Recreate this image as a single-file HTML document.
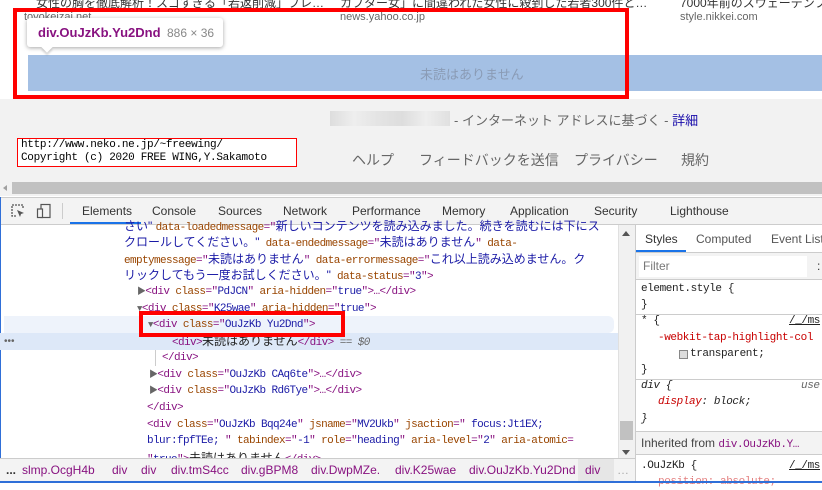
<!DOCTYPE html>
<html><head><meta charset="utf-8"><style>
*{margin:0;padding:0;box-sizing:border-box}
body{width:822px;height:483px;overflow:hidden;position:relative;background:#fff;font-family:"Liberation Sans","Noto Sans CJK JP",sans-serif;}
.a{position:absolute;white-space:nowrap}
.m{font-family:"Liberation Mono","Noto Sans CJK JP",monospace;font-size:11px;letter-spacing:-0.6px;color:#881280;line-height:16px}
.t{color:#881280}.n{color:#994500}.v{color:#1a1aa6}.k{color:#222}
.ja{font-family:"Liberation Sans","Noto Sans CJK JP",sans-serif;letter-spacing:0;font-size:12px}
.s{font-family:"Liberation Mono",monospace;font-size:11px;letter-spacing:-0.4px;color:#222;line-height:16px}
</style></head><body>
<div class="a" style="left:36px;top:-6px;font-size:12px;color:#333">女性の胸を徹底解析！スゴすぎる「若返削減」ブレ…</div>
<div class="a" style="left:340px;top:-6px;font-size:12px;color:#333">カブター女」に間違われた女性に殺到した若者300件と…</div>
<div class="a" style="left:680px;top:-6px;font-size:12px;color:#333">7000年前のスウェーデンブ</div>
<div class="a" style="left:24px;top:11px;font-size:11px;color:#666">toyokeizai.net</div>
<div class="a" style="left:340px;top:11px;font-size:11px;color:#666">news.yahoo.co.jp</div>
<div class="a" style="left:680px;top:11px;font-size:11px;color:#666">style.nikkei.com</div>
<div class="a" style="left:28px;top:55px;width:794px;height:36px;background:#a4c0e4"></div>
<div class="a" style="left:420px;top:64px;font-size:13px;color:#8a9bb5">未読はありません</div>
<div class="a" style="left:13px;top:8px;width:616px;height:91px;border:4px solid #f00"></div>
<div class="a" style="left:27px;top:18px;width:196px;height:29px;background:#fff;border-radius:3px;box-shadow:0 1px 4px rgba(0,0,0,.35)"></div>
<div class="a" style="left:43px;top:43px;width:8px;height:8px;background:#fff;transform:rotate(45deg);box-shadow:2px 2px 2px rgba(0,0,0,.15)"></div>
<div class="a" style="left:38px;top:25px;font-size:13px;font-weight:bold;color:#881280">div.OuJzKb.Yu2Dnd</div>
<div class="a" style="left:167px;top:26px;font-size:12px;color:#888">886 × 36</div>
<div class="a" style="left:0;top:99px;width:822px;height:97px;background:#f2f2f2"></div>
<div class="a" style="left:330px;top:111px;width:120px;height:15px;background:linear-gradient(90deg,#ddd,#eee 20%,#e4e4e4 40%,#ddd 60%,#eee 80%,#e0e0e0)"></div>
<div class="a" style="left:454px;top:110px;font-size:13px;color:#666">- インターネット アドレスに基づく - <span style="color:#1a0dab">詳細</span></div>
<div class="a" style="left:17px;top:138px;width:280px;height:29px;background:#fff;border:1px solid #f00"></div>
<div class="a" style="left:21px;top:139px;font-family:'Liberation Mono',monospace;font-size:11px;line-height:13px;color:#000;letter-spacing:-0.3px">http://www.neko.ne.jp/~freewing/<br>Copyright (c) 2020 FREE WING,Y.Sakamoto</div>
<div class="a" style="left:352px;top:150px;font-size:14px;color:#666">ヘルプ</div>
<div class="a" style="left:419px;top:150px;font-size:14px;color:#666">フィードバックを送信</div>
<div class="a" style="left:574px;top:150px;font-size:14px;color:#666">プライバシー</div>
<div class="a" style="left:681px;top:150px;font-size:14px;color:#666">規約</div>
<div class="a" style="left:12px;top:182px;width:810px;height:12px;background:#c1c1c1"></div>
<div class="a" style="left:3px;top:185px;width:0;height:0;border-top:3px solid transparent;border-bottom:3px solid transparent;border-right:4px solid #a0a0a0"></div>
<div class="a" style="left:0;top:197px;width:822px;height:28px;background:#f3f3f3;border-top:1px solid #ccc;border-bottom:1px solid #ccc"></div>
<svg class="a" style="left:10px;top:203px" width="16" height="16" viewBox="0 0 16 16"><path d="M6 13H2V2h11v4" fill="none" stroke="#555" stroke-width="1.3" stroke-dasharray="2 1"/><path d="M7 7l7 3-3 1-1 3z" fill="#555"/></svg>
<svg class="a" style="left:36px;top:203px" width="16" height="16" viewBox="0 0 16 16"><rect x="5" y="1.5" width="9" height="13" fill="none" stroke="#555" stroke-width="1.2"/><rect x="1.5" y="6" width="5" height="8.5" fill="#f3f3f3" stroke="#555" stroke-width="1.2"/></svg>
<div class="a" style="left:62px;top:203px;width:1px;height:16px;background:#ccc"></div>
<div class="a" style="left:0;top:204px;font-size:12px;color:#333;width:822px">
<span class="a" style="left:82px">Elements</span><span class="a" style="left:152px">Console</span><span class="a" style="left:218px">Sources</span><span class="a" style="left:283px">Network</span><span class="a" style="left:352px">Performance</span><span class="a" style="left:442px">Memory</span><span class="a" style="left:510px">Application</span><span class="a" style="left:594px">Security</span><span class="a" style="left:670px">Lighthouse</span></div>
<div class="a" style="left:70px;top:222px;width:71px;height:2px;background:#1a73e8"></div>
<div class="a" style="left:0;top:197px;width:1px;height:286px;background:#2f6fd8"></div>
<div class="a" style="left:4px;top:316px;width:610px;height:17px;background:#eef3fb;border-radius:0 6px 6px 0"></div>
<div class="a" style="left:0;top:333px;width:618px;height:17px;background:#dde8f8"></div>
<div class="a m" style="left:124px;top:218px"><span class="ja v">さい" </span><span class="n">data-loadedmessage</span>="<span class="ja v">新しいコンテンツを読み込みました。続きを読むには下にス</span></div>
<div class="a m" style="left:124px;top:234px"><span class="ja v">クロールしてください。"</span> <span class="n">data-endedmessage</span>="<span class="ja v">未読はありません</span>" <span class="n">data-</span></div>
<div class="a m" style="left:124px;top:251px"><span class="n">emptymessage</span>="<span class="ja v">未読はありません</span>" <span class="n">data-errormessage</span>="<span class="ja v">これ以上読み込めません。ク</span></div>
<div class="a m" style="left:124px;top:267px"><span class="ja v">リックしてもう一度お試しください。"</span> <span class="n">data-status</span>="<span class="v">3</span>"&gt;</div>
<div class="a m" style="left:137px;top:284px"><span style="color:#666;font-size:9px">▶</span>&lt;div <span class="n">class</span>="<span class="v">PdJCN</span>" <span class="n">aria-hidden</span>="<span class="v">true</span>"&gt;…&lt;/div&gt;</div>
<div class="a m" style="left:137px;top:301px"><span style="color:#666;font-size:9px">▼</span>&lt;div <span class="n">class</span>="<span class="v">K25wae</span>" <span class="n">aria-hidden</span>="<span class="v">true</span>"&gt;</div>
<div class="a m" style="left:148px;top:317px"><span style="color:#666;font-size:9px">▼</span>&lt;div <span class="n">class</span>="<span class="v">OuJzKb Yu2Dnd</span>"&gt;</div>
<div class="a" style="left:4px;top:336px;color:#666;font-size:10px">•••</div>
<div class="a m" style="left:172px;top:333px">&lt;div&gt;<span class="ja k">未読はありません</span>&lt;/div&gt; <span style="color:#666">== <i>$0</i></span></div>
<div class="a" style="left:155px;top:350px;width:1px;height:16px;background:#ccc"></div>
<div class="a m" style="left:162px;top:350px">&lt;/div&gt;</div>
<div class="a m" style="left:149px;top:367px"><span style="color:#666;font-size:9px">▶</span>&lt;div <span class="n">class</span>="<span class="v">OuJzKb CAq6te</span>"&gt;…&lt;/div&gt;</div>
<div class="a m" style="left:149px;top:383px"><span style="color:#666;font-size:9px">▶</span>&lt;div <span class="n">class</span>="<span class="v">OuJzKb Rd6Tye</span>"&gt;…&lt;/div&gt;</div>
<div class="a m" style="left:147px;top:400px">&lt;/div&gt;</div>
<div class="a m" style="left:147px;top:417px">&lt;div <span class="n">class</span>="<span class="v">OuJzKb Bqq24e</span>" <span class="n">jsname</span>="<span class="v">MV2Ukb</span>" <span class="n">jsaction</span>="<span class="v"> focus:Jt1EX;</span></div>
<div class="a m" style="left:147px;top:433px"><span class="v">blur:fpfTEe; </span>" <span class="n">tabindex</span>="<span class="v">-1</span>" <span class="n">role</span>="<span class="v">heading</span>" <span class="n">aria-level</span>="<span class="v">2</span>" <span class="n">aria-atomic</span>=</div>
<div class="a m" style="left:147px;top:450px">"<span class="v">true</span>"&gt;<span class="ja k">未読はありません</span>&lt;/div&gt;</div>
<div class="a" style="left:139px;top:311px;width:206px;height:26px;border:4px solid #f00"></div>
<div class="a" style="left:618px;top:225px;width:17px;height:233px;background:#f1f1f1;border-left:1px solid #e0e0e0"></div>
<div class="a" style="left:622px;top:231px;border-left:4px solid transparent;border-right:4px solid transparent;border-bottom:5px solid #555"></div>
<div class="a" style="left:620px;top:421px;width:13px;height:19px;background:#c1c1c1"></div>
<div class="a" style="left:622px;top:450px;border-left:4px solid transparent;border-right:4px solid transparent;border-top:5px solid #555"></div>
<div class="a" style="left:0;top:458px;width:636px;height:25px;background:#f3f3f3;border-top:1px solid #ccc"></div>
<div class="a" style="left:578px;top:459px;width:36px;height:24px;background:#e6e6e6"></div>
<div class="a" style="left:0;top:463px;font-size:12px;color:#881280;width:636px">
<span class="a" style="left:6px;color:#333;font-weight:bold">...</span><span class="a" style="left:22px">slmp.OcgH4b</span><span class="a" style="left:112px">div</span><span class="a" style="left:141px">div</span><span class="a" style="left:171px">div.tmS4cc</span><span class="a" style="left:241px">div.gBPM8</span><span class="a" style="left:311px">div.DwpMZe.</span><span class="a" style="left:395px">div.K25wae</span><span class="a" style="left:469px">div.OuJzKb.Yu2Dnd</span><span class="a" style="left:585px">div</span><span class="a" style="left:617px;color:#aaa">…</span></div>
<div class="a" style="left:635px;top:225px;width:187px;height:258px;background:#fff;border-left:1px solid #ccc"></div>
<div class="a" style="left:636px;top:225px;width:186px;height:28px;border-bottom:1px solid #ccc"></div>
<div class="a" style="left:645px;top:232px;font-size:12px;color:#333">Styles</div>
<div class="a" style="left:696px;top:232px;font-size:12px;color:#555">Computed</div>
<div class="a" style="left:771px;top:232px;font-size:12px;color:#555">Event List</div>
<div class="a" style="left:636px;top:250px;width:50px;height:2px;background:#1a73e8"></div>
<div class="a" style="left:636px;top:253px;width:186px;height:27px;background:#f3f3f3;border-bottom:1px solid #ccc"></div>
<div class="a" style="left:639px;top:256px;width:168px;height:21px;background:#fff"></div>
<div class="a" style="left:643px;top:259px;font-size:12px;color:#777">Filter</div>
<div class="a" style="left:817px;top:259px;font-size:12px;color:#333">:</div>
<div class="a s" style="left:641px;top:281px">element.style {<br>}</div>
<div class="a" style="left:636px;top:314px;width:186px;height:1px;background:#ccc"></div>
<div class="a s" style="left:641px;top:313px">* {</div>
<div class="a s" style="left:789px;top:313px;text-decoration:underline">/_/ms</div>
<div class="a s" style="left:658px;top:330px;color:#c80000">-webkit-tap-highlight-col</div>
<div class="a" style="left:679px;top:350px;width:9px;height:9px;border:1px solid #888;background:#ddd"></div>
<div class="a s" style="left:690px;top:346px">transparent;</div>
<div class="a s" style="left:641px;top:362px">}</div>
<div class="a" style="left:636px;top:379px;width:186px;height:1px;background:#ccc"></div>
<div class="a s" style="left:641px;top:378px;font-style:italic">div {</div>
<div class="a s" style="left:801px;top:378px;font-style:italic;color:#666">use</div>
<div class="a s" style="left:658px;top:394px;font-style:italic"><span style="color:#c80000">display</span>: block;</div>
<div class="a s" style="left:641px;top:411px;font-style:italic">}</div>
<div class="a" style="left:636px;top:431px;width:186px;height:24px;background:#f3f3f3;border-top:1px solid #ccc;border-bottom:1px solid #ccc"></div>
<div class="a" style="left:641px;top:436px;font-size:12px;color:#444">Inherited from <span style="font-family:'Liberation Mono',monospace;font-size:11px;color:#881280;letter-spacing:-0.4px">div.OuJzKb.Y…</span></div>
<div class="a s" style="left:641px;top:458px">.OuJzKb {</div>
<div class="a s" style="left:789px;top:458px;text-decoration:underline">/_/ms</div>
<div class="a s" style="left:658px;top:474px;color:#c80000;opacity:.5">position: absolute;</div>
<div class="a" style="left:0;top:481px;width:822px;height:2px;background:#2f6fd8"></div>
</body></html>
